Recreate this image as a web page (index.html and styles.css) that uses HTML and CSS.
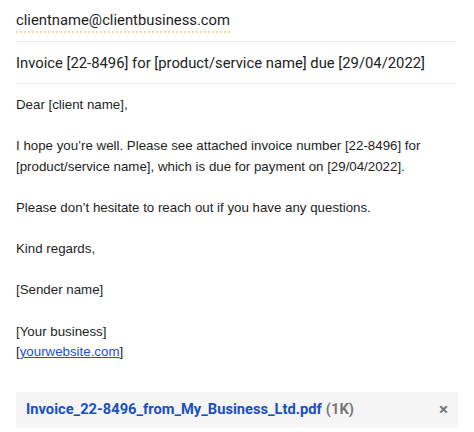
FILE: index.html
```html
<!DOCTYPE html>
<html>
<head>
<meta charset="utf-8">
<link rel="stylesheet" href="styles.css">
</head>
<body>
<div class="mail">
  <div class="row to-row"><span class="to">clientname@clientbusiness.com</span></div>
  <div class="row subject">Invoice [22-8496] for [product/service name] due [29/04/2022]</div>
  <div class="body">
    <p>Dear [client name],</p>
    <p>I hope you’re well. Please see attached invoice number [22-8496] for<br>[product/service name], which is due for payment on [29/04/2022].</p>
    <p>Please don’t hesitate to reach out if you have any questions.</p>
    <p>Kind regards,</p>
    <p>[Sender name]</p>
    <p>[Your business]<br>[<a href="#">yourwebsite.com</a>]</p>
  </div>
  <div class="attach">
    <span class="file">Invoice_22-8496_from_My_Business_Ltd.pdf</span>
    <span class="size">(1K)</span>
    <span class="close">×</span>
  </div>
</div>
</body>
</html>
```
FILE: styles.css
```css
html, body { margin: 0; padding: 0; background: #fff; }
.mail { padding: 0 16px; width: 442px; }
.row {
  font-family: Roboto, sans-serif;
  font-size: 14.8px;
  color: #222;
  border-bottom: 1px solid #ececec;
  box-sizing: border-box;
  white-space: nowrap;
  width: 440px;
}
.to-row { height: 42px; padding-top: 10px; line-height: 20px; }
.to { border-bottom: 2px dotted #f3d9a4; padding-bottom: 2px; }
.subject { height: 42px; padding-top: 10px; line-height: 22px; }
.body {
  font-family: "Liberation Sans", Arial, sans-serif;
  font-size: 13.3px;
  line-height: 20.6px;
  color: #1e1e1e;
  padding-top: 11px;
}
.body p { margin: 0 0 20.6px 0; white-space: nowrap; }
.body a { color: #1a4fd6; text-decoration: underline; }
.attach {
  margin-top: 29px;
  width: 442px;
  height: 35px;
  background: #f5f5f5;
  display: flex;
  align-items: center;
  padding: 0 10px;
  box-sizing: border-box;
  font-family: Roboto, sans-serif;
  font-weight: bold;
  font-size: 14.7px;
}
.file { color: #1a4fbf; }
.size { color: #777; margin-left: 4px; }
.close { margin-left: auto; color: #777; font-size: 17px; }
```
